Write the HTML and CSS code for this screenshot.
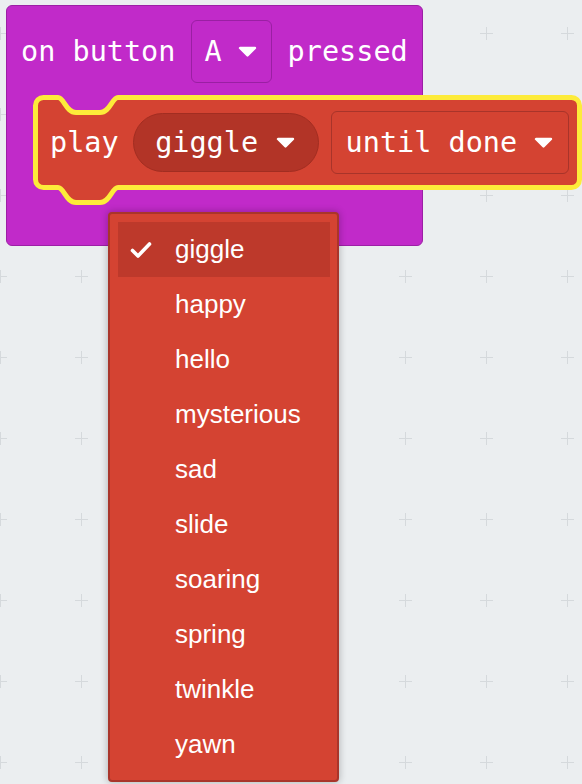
FILE: index.html
```html
<!DOCTYPE html>
<html lang="en">
<head>
<meta charset="utf-8">
<title>MakeCode blocks</title>
<link rel="stylesheet" href="styles.css">
</head>
<body>
<div class="workspace">
  <svg class="grid" width="582" height="784" aria-hidden="true">
    <defs>
      <pattern id="grid-cross" width="81" height="81" x="-40" y="-7" patternUnits="userSpaceOnUse">
        <path d="M34 40.5H47M40.5 34V47" stroke="#d5d9dc" stroke-width="1" fill="none"/>
      </pattern>
    </defs>
    <rect width="582" height="784" fill="url(#grid-cross)"/>
  </svg>

  <div class="event-block">
    <div class="event-header">
      <span class="label">on button</span>
      <span class="field-box purple">
        <span class="label">A</span>
        <svg class="caret" width="19" height="11" viewBox="0 0 19 11"><path d="M2 2H17L9.5 9.5Z"/></svg>
      </span>
      <span class="label">pressed</span>
    </div>

    <div class="stmt">
      <svg class="stmt-shape" width="549" height="110" viewBox="0 0 549 110" aria-hidden="true">
        <path d="M2.5 10.5A8 8 0 0 1 10.5 2.5L25 2.5C31 2.5 33 17.5 43 17.5L67 17.5C77 17.5 79 2.5 85 2.5L538.5 2.5A8 8 0 0 1 546.5 10.5L546.5 84.5A8 8 0 0 1 538.5 92.5L85 92.5C79 92.5 77 107.5 67 107.5L43 107.5C33 107.5 31 92.5 25 92.5L10.5 92.5A8 8 0 0 1 2.5 84.5Z"/>
      </svg>
      <div class="stmt-row">
        <span class="label">play</span>
        <span class="pill">
          <span class="label">giggle</span>
          <svg class="caret" width="19" height="11" viewBox="0 0 19 11"><path d="M2 2H17L9.5 9.5Z"/></svg>
        </span>
        <span class="field-box red">
          <span class="label">until done</span>
          <svg class="caret" width="19" height="11" viewBox="0 0 19 11"><path d="M2 2H17L9.5 9.5Z"/></svg>
        </span>
      </div>
    </div>
  </div>

  <div class="menu">
    <div class="menu-item selected">
      <span class="check"><svg width="22" height="18" viewBox="0 0 22 18"><path d="M2.5 9.5L8 15L19.5 3"/></svg></span>
      <span>giggle</span>
    </div>
    <div class="menu-item"><span class="check"></span><span>happy</span></div>
    <div class="menu-item"><span class="check"></span><span>hello</span></div>
    <div class="menu-item"><span class="check"></span><span>mysterious</span></div>
    <div class="menu-item"><span class="check"></span><span>sad</span></div>
    <div class="menu-item"><span class="check"></span><span>slide</span></div>
    <div class="menu-item"><span class="check"></span><span>soaring</span></div>
    <div class="menu-item"><span class="check"></span><span>spring</span></div>
    <div class="menu-item"><span class="check"></span><span>twinkle</span></div>
    <div class="menu-item"><span class="check"></span><span>yawn</span></div>
  </div>
</div>
</body>
</html>
```

FILE: styles.css
```css
html, body {
  margin: 0;
  padding: 0;
}

body {
  background: #ebeef0;
  width: 582px;
  height: 784px;
  overflow: hidden;
}

.workspace {
  position: relative;
  width: 582px;
  height: 784px;
}

.grid {
  position: absolute;
  left: 0;
  top: 0;
  display: block;
}

.label {
  font-family: "DejaVu Sans Mono", "Liberation Mono", monospace;
  font-size: 28.5px;
  color: #ffffff;
  white-space: pre;
}

/* event (hat) block placed on the canvas */
.event-block {
  position: absolute;
  left: 6px;
  top: 5px;
  width: 417px;
  height: 241px;
  box-sizing: border-box;
  background: #c12ac9;
  border: 1px solid #9c20a5;
  border-radius: 6px;
  padding: 14px 0 0 14px;
  display: flex;
  flex-direction: column;
  align-items: flex-start;
}

.event-header {
  display: flex;
  align-items: center;
  gap: 15.5px;
  height: 63px;
}

.field-box {
  box-sizing: border-box;
  height: 63px;
  display: flex;
  align-items: center;
  border-radius: 6px;
  border: 1.5px solid;
}

.field-box.purple {
  background: #c12ac9;
  border-color: #9a1fa3;
  padding: 0 14.5px 0 12.5px;
  gap: 16px;
}

.field-box.red {
  background: #d44332;
  border-color: #a8342a;
  padding: 0 14.5px 0 13.5px;
  gap: 17px;
  margin-left: 12.5px;
}

.caret {
  display: block;
  flex: none;
}

.caret path {
  fill: #ffffff;
  stroke: #ffffff;
  stroke-width: 2.4;
  stroke-linejoin: round;
}

/* statement block inside the event block */
.stmt {
  position: relative;
  width: 549px;
  height: 110px;
  margin: 12px 0 0 12px;
  flex: none;
}

.stmt-shape {
  position: absolute;
  left: 0;
  top: 0;
  display: block;
}

.stmt-shape path {
  fill: #d44332;
  stroke: #fdeb3a;
  stroke-width: 5;
  stroke-linejoin: round;
}

.stmt-row {
  position: relative;
  height: 95px;
  display: flex;
  align-items: center;
  padding-left: 17px;
}

.pill {
  box-sizing: border-box;
  height: 59px;
  margin-left: 14.5px;
  display: flex;
  align-items: center;
  gap: 17.5px;
  padding: 0 23px 0 21px;
  background: #b23427;
  border: 1px solid #a22d21;
  border-radius: 30px;
}

/* dropdown menu overlay */
.menu {
  position: absolute;
  left: 108px;
  top: 212px;
  width: 231px;
  height: 570px;
  box-sizing: border-box;
  background: #d44332;
  border: 2px solid #a9352a;
  border-radius: 4px;
  padding: 8px 7px 8px 8px;
  box-shadow: 0 0 7px 1px rgba(0, 0, 0, 0.22);
}

.menu-item {
  height: 55px;
  display: flex;
  align-items: center;
  padding-left: 12px;
  font-family: "Liberation Sans", Arial, sans-serif;
  font-size: 26px;
  color: #ffffff;
}

.menu-item.selected {
  background: #bd392b;
}

.check {
  width: 22px;
  height: 18px;
  margin-right: 23px;
  flex: none;
  display: flex;
}

.check path {
  fill: none;
  stroke: #ffffff;
  stroke-width: 3.6;
  stroke-linecap: round;
  stroke-linejoin: round;
}
```
